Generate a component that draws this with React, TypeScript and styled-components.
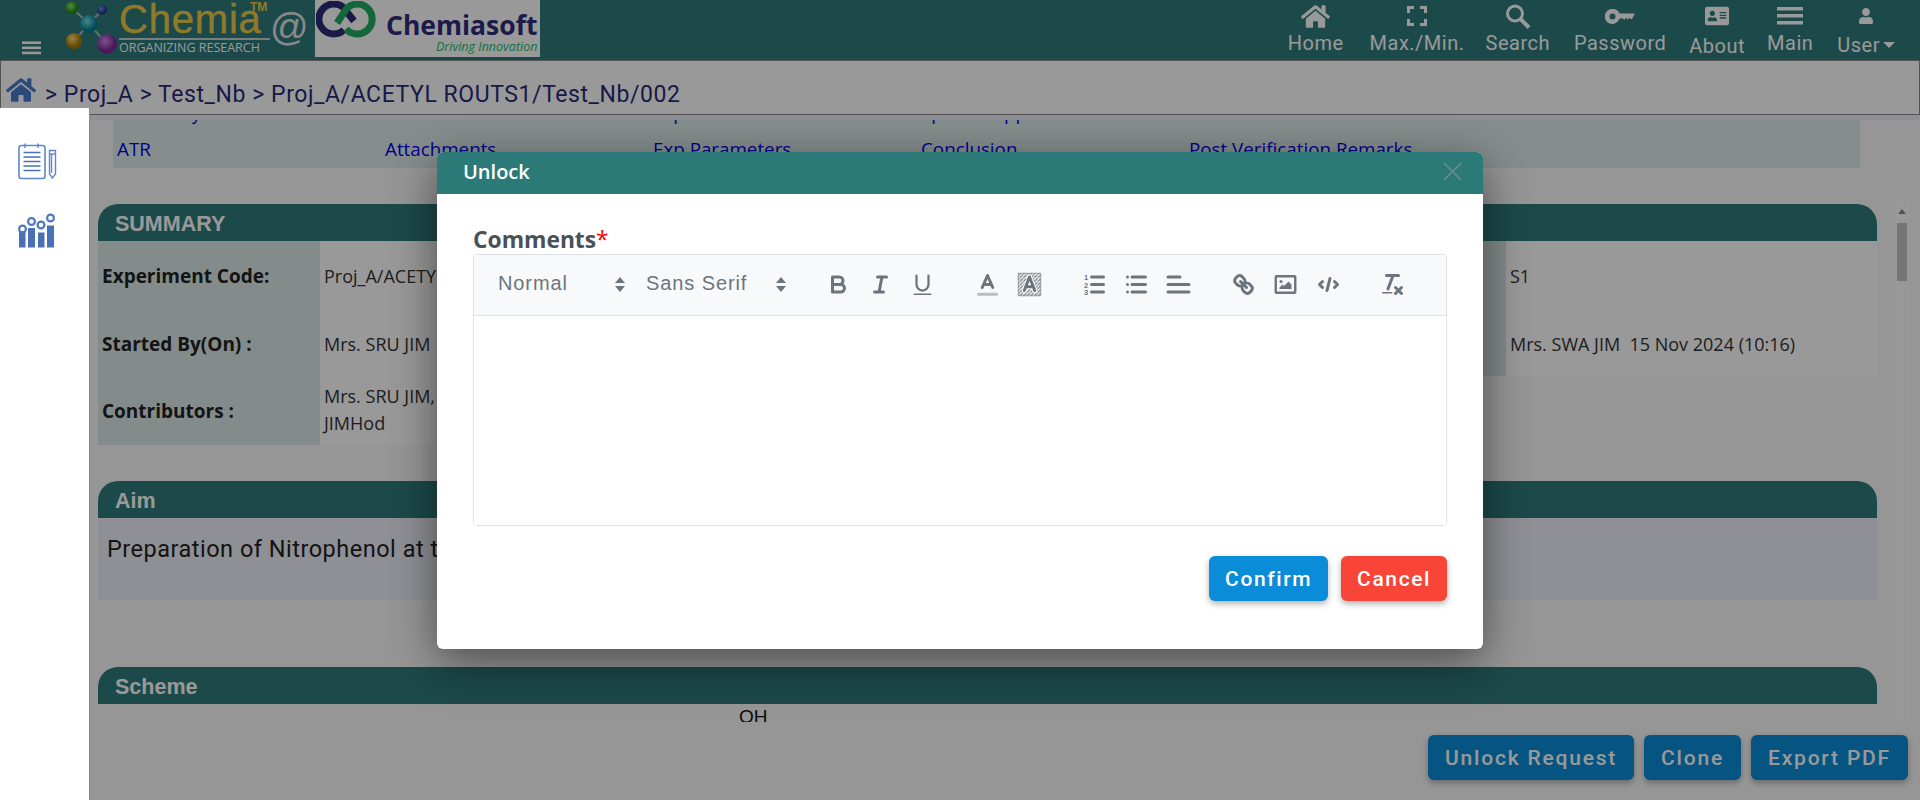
import React from "react";
import styled, { createGlobalStyle } from "styled-components";
import { FaAddressCard, FaHome, FaUser } from "react-icons/fa";

const GlobalStyle = createGlobalStyle`
  html, body {
    margin: 0;
    padding: 0;
    height: 100%;
    overflow: hidden;
    background: #fafafa;
    font-family: Roboto, "Liberation Sans", sans-serif;
  }
  * { box-sizing: border-box; }
`;

const NAV_ITEMS = [
  { label: "Home", icon: <FaHome size={29} />, gap: 26 },
  { label: "Max./Min.", icon: <FullscreenIcon />, gap: 21 },
  { label: "Search", icon: <SearchIcon />, gap: 24 },
  { label: "Password", icon: <KeyIcon />, gap: 23 },
  { label: "About", icon: <FaAddressCard size={24} />, gap: 22, drop: 3 },
  { label: "Main", icon: <BarsIcon />, gap: 24 },
];

const TAB_ROWS = [
  ["Summary", "Details", "Exp Procedure", "Spectra Apparatus", "Verification"],
  ["ATR", "Attachments", "Exp Parameters", "Conclusion", "Post Verification Remarks"],
];

function FullscreenIcon() {
  return (
    <svg width="20" height="20" viewBox="0 0 20 20" fill="none" stroke="currentColor" strokeWidth="3">
      <path d="M1.5 7V1.5H7M13 1.5H18.5V7M18.5 13V18.5H13M7 18.5H1.5V13" />
    </svg>
  );
}

function SearchIcon() {
  return (
    <svg width="26" height="25" viewBox="0 0 26 25" fill="none" stroke="currentColor">
      <circle cx="10" cy="9.5" r="7.5" strokeWidth="3" />
      <path d="M15.5 15L24 23.5" strokeWidth="4" />
    </svg>
  );
}

function KeyIcon() {
  return (
    <svg width="30" height="15" viewBox="0 0 30 15" fill="currentColor">
      <path fillRule="evenodd" d="M7.5 0a7.5 7.5 0 0 1 7 4.5H30l-3 5.500h-1.5L24 8.500 22.500 11 21 8.500 19.500 11 18 9.500h-3.500a7.500 7.500 0 1 1-7-9.500zm0 4.500a3 3 0 1 0 0 6 3 3 0 0 0 0-6z" />
    </svg>
  );
}

function BarsIcon() {
  return (
    <svg width="26" height="18" viewBox="0 0 26 18" fill="currentColor">
      <rect width="26" height="3.5" />
      <rect y="7" width="26" height="3.5" />
      <rect y="14" width="26" height="3.5" />
    </svg>
  );
}

function Molecule() {
  return (
    <svg width="60" height="56" viewBox="0 0 60 56">
      <defs>
        <radialGradient id="mGreen" cx="40%" cy="35%"><stop offset="0" stopColor="#8fe86a" /><stop offset="1" stopColor="#1f8a22" /></radialGradient>
        <radialGradient id="mBlue" cx="40%" cy="35%"><stop offset="0" stopColor="#6f8fe0" /><stop offset="1" stopColor="#203a90" /></radialGradient>
        <radialGradient id="mTeal" cx="40%" cy="35%"><stop offset="0" stopColor="#6fe4ee" /><stop offset="1" stopColor="#0a7e92" /></radialGradient>
        <radialGradient id="mGold" cx="40%" cy="35%"><stop offset="0" stopColor="#ffe070" /><stop offset="1" stopColor="#a87a08" /></radialGradient>
        <radialGradient id="mPurple" cx="40%" cy="35%"><stop offset="0" stopColor="#d08ae0" /><stop offset="1" stopColor="#7a2a98" /></radialGradient>
      </defs>
      <path d="M12 8L29 24L42 10M29 24L14 41M29 24L47 44" stroke="#b0b8b8" strokeWidth="2" fill="none" />
      <circle cx="12" cy="8" r="6.5" fill="url(#mGreen)" />
      <circle cx="42" cy="10" r="5" fill="url(#mBlue)" />
      <circle cx="29" cy="24" r="9" fill="url(#mTeal)" />
      <circle cx="14" cy="41" r="8" fill="url(#mGold)" />
      <circle cx="47" cy="44" r="10" fill="url(#mPurple)" />
    </svg>
  );
}

function RingsLogo() {
  return (
    <svg width="62" height="40" viewBox="0 0 62 40" fill="none" strokeWidth="7">
      <path d="M28 29A15 15 0 1 1 27 6L38 20" stroke="#2d2a78" />
      <path d="M21 22L31 7A15 15 0 1 1 30 28" stroke="#21ad62" />
    </svg>
  );
}

function NotepadIcon() {
  return (
    <svg width="40" height="37" viewBox="0 0 40 37" fill="none" stroke="#5f86cf">
      <rect x="1" y="2.5" width="26" height="33" rx="2.5" strokeWidth="1.6" />
      <path d="M7 0.5V5M20 0.5V5" strokeWidth="1.4" />
      <path d="M5.5 9.5H22.5M5.5 14H22.5M5.5 18.5H22.5M5.5 23H22.5M5.5 27.5H22.5" strokeWidth="1.3" stroke="#4a70b8" />
      <path d="M31.5 7.5H37.5V31L34.5 35L31.5 31Z" strokeWidth="1.4" />
      <path d="M31.5 11H37.5" strokeWidth="1.4" />
      <path d="M33.5 11V30" strokeWidth="1.4" />
    </svg>
  );
}

function ChartIcon() {
  return (
    <svg width="38" height="35" viewBox="0 0 38 35" fill="none">
      <path d="M1 18H7.5V34.500H1ZM10 15H17V34.500H10ZM20 19.500H26.500V34.500H20ZM29 12.500H36V34.500H29Z" fill="#4a70b8" />
      <g stroke="#4f78c0" strokeWidth="2.200">
        <circle cx="4.500" cy="16" r="3.400" />
        <circle cx="13.500" cy="8.500" r="3.400" />
        <circle cx="23" cy="12" r="3.400" />
        <circle cx="32.500" cy="5" r="3.400" />
      </g>
    </svg>
  );
}

// quill snow toolbar icons, 18 unit grid
const QuillSvg: React.FC<{ children: React.ReactNode }> = ({ children }) => (
  <svg width="27" height="27" viewBox="0 0 18 18" fill="none" stroke="#6c757d" strokeWidth="2" strokeLinecap="round" strokeLinejoin="round">
    {children}
  </svg>
);

const ToolIcons: Record<string, React.ReactNode> = {
  bold: (
    <QuillSvg>
      <path d="M5,4H9.500A2.500,2.500,0,0,1,12,6.500v0A2.500,2.500,0,0,1,9.500,9H5V4Z" />
      <path d="M5,9h5.500A2.500,2.500,0,0,1,13,11.500v0A2.500,2.500,0,0,1,10.500,14H5V9Z" />
    </QuillSvg>
  ),
  italic: (
    <QuillSvg>
      <path d="M7 4H13M5 14H11M8 14L10 4" />
    </QuillSvg>
  ),
  underline: (
    <QuillSvg>
      <path d="M5,3V9a4,4,0,0,0,4,4h0a4,4,0,0,0,4-4V3" strokeWidth="1.500" />
      <rect x="3" y="15" width="12" height="1" rx="0.500" fill="#6c757d" stroke="none" />
    </QuillSvg>
  ),
  color: (
    <QuillSvg>
      <path d="M3 15.500H15" stroke="#b9bdc1" />
      <path d="M5.500 11L9 3L12.500 11M11.630 9H6.380" />
    </QuillSvg>
  ),
  background: (
    <QuillSvg>
      <defs>
        <pattern id="hatch" width="2.400" height="2.400" patternUnits="userSpaceOnUse">
          <path d="M0 2.400L2.400 0" stroke="#6c757d" strokeWidth="0.800" />
        </pattern>
      </defs>
      <rect x="1.500" y="1.500" width="15" height="15" fill="url(#hatch)" stroke="#6c757d" strokeWidth="0.500" strokeDasharray="0.700 0.700" />
      <path d="M5.500 13L9 4L12.500 13M11.630 10.500H6.380" stroke="#fff" strokeWidth="3.200" />
      <path d="M5.500 13L9 4L12.500 13M11.630 10.500H6.380" />
    </QuillSvg>
  ),
  ordered: (
    <QuillSvg>
      <path d="M7 4H15M7 9H15M7 14H15" />
      <g fill="#6c757d" stroke="none" fontFamily="Liberation Sans" fontSize="5" fontWeight="700">
        <text x="2" y="6">1</text>
        <text x="2" y="11">2</text>
        <text x="2" y="16">3</text>
      </g>
    </QuillSvg>
  ),
  bullet: (
    <QuillSvg>
      <path d="M6 4H15M6 9H15M6 14H15M3 4V4M3 9V9M3 14V14" />
    </QuillSvg>
  ),
  align: (
    <QuillSvg>
      <path d="M2 9H16M2 14H16M2 4H10" />
    </QuillSvg>
  ),
  link: (
    <QuillSvg>
      <path d="M7 7L11 11" />
      <path d="M8.900,4.577a3.476,3.476,0,0,1,.36,4.679A3.476,3.476,0,0,1,4.577,8.900C3.185,7.500,2.035,6.400,4.217,4.217S7.500,3.185,8.900,4.577Z" />
      <path d="M13.423,9.100a3.476,3.476,0,0,0-4.679-.36,3.476,3.476,0,0,0,.36,4.679c1.392,1.392,2.500,2.542,4.679.36S14.815,10.500,13.423,9.100Z" />
    </QuillSvg>
  ),
  image: (
    <QuillSvg>
      <rect x="2.500" y="3.500" width="13" height="11" rx="0.500" strokeWidth="1.600" />
      <circle cx="6" cy="7" r="1" fill="#6c757d" stroke="none" />
      <polygon points="5 12 5 11 7 9 8 10 11 7 13 9 13 12 5 12" fill="#6c757d" stroke="none" />
    </QuillSvg>
  ),
  code: (
    <QuillSvg>
      <path d="M5 7L3 9L5 11M13 7L15 9L13 11M10 5L8 13" />
    </QuillSvg>
  ),
  clean: (
    <QuillSvg>
      <path d="M5 3H13M6 12L9.350 3M11 11L15 15M15 11L11 15" />
      <rect x="2" y="14" width="7" height="1" rx="0.500" fill="#6c757d" stroke="none" />
    </QuillSvg>
  ),
};

const TOOL_GROUPS = [
  ["bold", "italic", "underline"],
  ["color", "background"],
  ["ordered", "bullet", "align"],
  ["link", "image", "code"],
  ["clean"],
];

const App: React.FC = () => {
  return (
    <>
      <GlobalStyle />
      <Page>
        <Header>
          <MenuToggle>
            <BarsIcon />
          </MenuToggle>
          <MoleculeSlot>
            <Molecule />
          </MoleculeSlot>
          <Brand>
            <BrandName>Chemia</BrandName>
            <TradeMark>TM</TradeMark>
            <BrandTag>ORGANIZING RESEARCH</BrandTag>
          </Brand>
          <AtSign>@</AtSign>
          <PartnerLogo>
            <RingsLogo />
            <PartnerText>
              <PartnerName>Chemiasoft</PartnerName>
              <PartnerTag>Driving Innovation</PartnerTag>
            </PartnerText>
          </PartnerLogo>
          <Nav>
            {NAV_ITEMS.map((item) => (
              <NavItem key={item.label} $gap={item.gap}>
                <NavIcon>{item.icon}</NavIcon>
                <NavLabel $drop={item.drop ?? 0}>{item.label}</NavLabel>
              </NavItem>
            ))}
            <NavItem $gap={0}>
              <NavIcon>
                <FaUser size={16} />
              </NavIcon>
              <NavLabel $drop={2}>
                User<Caret />
              </NavLabel>
            </NavItem>
          </Nav>
        </Header>

        <Breadcrumb>
          <CrumbHome>
            <FaHome size={30} />
          </CrumbHome>
          <CrumbText>&gt; Proj_A &gt; Test_Nb &gt; Proj_A/ACETYL ROUTS1/Test_Nb/002</CrumbText>
        </Breadcrumb>

        <Body>
          <Sidebar>
            <NotepadIcon />
            <ChartIcon />
          </Sidebar>
          <Main>
            <TopBand />
            <TabStrip>
              {TAB_ROWS.map((row, i) => (
                <TabRow key={i} $first={i === 0}>
                  {row.map((tab) => (
                    <TabLink key={tab}>{tab}</TabLink>
                  ))}
                </TabRow>
              ))}
            </TabStrip>

            <ScrollArea>
              <Content>
                <Section $top={36}>
                  <SectionBar>
                    <SectionTitle>SUMMARY</SectionTitle>
                  </SectionBar>
                  <SummaryGrid>
                    <LabelCell>Experiment Code:</LabelCell>
                    <ValueCell>Proj_A/ACETYL ROUTS1/Test_Nb/002</ValueCell>
                    <LabelCell>Reference:</LabelCell>
                    <ValueCell>S1</ValueCell>
                    <LabelCell>Started By(On) :</LabelCell>
                    <ValueCell>Mrs. SRU JIM&nbsp;&nbsp;15 Nov 2024 (10:10)</ValueCell>
                    <LabelCell>Completed By(On) :</LabelCell>
                    <ValueCell>Mrs. SWA JIM&nbsp; 15 Nov 2024 (10:16)</ValueCell>
                    <LabelCell>Contributors :</LabelCell>
                    <ContributorCell>
                      Mrs. SRU JIM, Mrs. SWA JIM,
                      <br />
                      JIMHod
                    </ContributorCell>
                  </SummaryGrid>
                </Section>

                <Section $top={36}>
                  <SectionBar>
                    <SectionTitle>Aim</SectionTitle>
                  </SectionBar>
                  <AimBody>Preparation of Nitrophenol at temperature</AimBody>
                </Section>

                <Section $top={67}>
                  <SectionBar>
                    <SectionTitle>Scheme</SectionTitle>
                  </SectionBar>
                  <SchemeBody>OH</SchemeBody>
                </Section>
              </Content>
              <Scrollbar>
                <ScrollArrow />
                <ScrollThumb />
              </Scrollbar>
            </ScrollArea>

            <ActionRow>
              <ActionButton>Unlock Request</ActionButton>
              <ActionButton>Clone</ActionButton>
              <ActionButton>Export PDF</ActionButton>
            </ActionRow>
          </Main>
        </Body>

        <Overlay>
          <Modal>
            <ModalHeader>
              <ModalTitle>Unlock</ModalTitle>
              <CloseIcon viewBox="0 0 20 20">
                <path d="M1 1L19 19M19 1L1 19" />
              </CloseIcon>
            </ModalHeader>
            <ModalBody>
              <FieldLabel>
                Comments<Required>*</Required>
              </FieldLabel>
              <Editor>
                <Toolbar>
                  <Picker $caret={13}>
                    <PickerLabel>Normal</PickerLabel>
                  </Picker>
                  <Picker $caret={0}>
                    <PickerLabel>Sans Serif</PickerLabel>
                  </Picker>
                  <ToolGroups>
                    {TOOL_GROUPS.map((group) => (
                      <ToolGroup key={group[0]}>
                        {group.map((name) => (
                          <ToolButton key={name}>{ToolIcons[name]}</ToolButton>
                        ))}
                      </ToolGroup>
                    ))}
                  </ToolGroups>
                </Toolbar>
                <EditorArea />
              </Editor>
              <ModalActions>
                <ActionButton>Confirm</ActionButton>
                <ActionButton $danger>Cancel</ActionButton>
              </ModalActions>
            </ModalBody>
          </Modal>
        </Overlay>
      </Page>
    </>
  );
};

const Page = styled.div`
  position: relative;
  width: 1920px;
  height: 800px;
  overflow: hidden;
  display: flex;
  flex-direction: column;
`;

const Header = styled.header`
  height: 60px;
  flex: none;
  display: flex;
  align-items: flex-start;
  background: #2f7b7b;
  color: #fff;
`;

const MenuToggle = styled.div`
  margin: 40px 0 0 22px;
  color: #fff;

  svg {
    display: block;
    width: 19px;
    height: 16px;
  }
`;

const MoleculeSlot = styled.div`
  width: 59px;
  margin-left: 19px;
`;

const Brand = styled.div`
  position: relative;
  width: 151px;
  height: 57px;
`;

const BrandName = styled.div`
  font-family: "Liberation Sans", sans-serif;
  font-size: 40px;
  letter-spacing: 0.8px;
  line-height: 38px;
  height: 40px;
  color: #efcc46;
  border-bottom: 2px solid #c8d0d0;
  -webkit-text-stroke: 0.4px #efcc46;
`;

const TradeMark = styled.span`
  position: absolute;
  top: 0;
  left: 131px;
  font-family: "Liberation Sans", sans-serif;
  font-size: 12px;
  font-weight: 700;
  color: #efcc46;
`;

const BrandTag = styled.div`
  font-family: "Open Sans", sans-serif;
  font-size: 12.5px;
  line-height: 15px;
  color: #fff;
  white-space: nowrap;
`;

const AtSign = styled.div`
  width: 45px;
  font-family: "Liberation Sans", sans-serif;
  font-size: 38px;
  line-height: 54px;
  color: #e4e4e4;
`;

const PartnerLogo = styled.div`
  width: 225px;
  height: 57px;
  display: flex;
  align-items: flex-start;
  gap: 8px;
  background: #fff;
  padding: 0 0 0 1px;

  svg {
    margin-top: 1px;
  }
`;

const PartnerText = styled.div`
  display: flex;
  flex-direction: column;
  align-items: flex-end;
  padding-top: 10px;
`;

const PartnerName = styled.div`
  font-family: "Open Sans", sans-serif;
  font-weight: 700;
  font-size: 26.5px;
  line-height: 30px;
  color: #302c7a;
`;

const PartnerTag = styled.div`
  font-family: "Open Sans", sans-serif;
  font-style: italic;
  font-size: 12.5px;
  line-height: 14px;
  color: #22ba69;
`;

const Nav = styled.nav`
  margin-left: auto;
  padding-right: 25px;
  display: flex;
  align-items: flex-start;
`;

const NavItem = styled.div<{ $gap: number }>`
  display: flex;
  flex-direction: column;
  align-items: center;
  margin-right: ${(p) => p.$gap}px;
  color: #fff;
`;

const NavIcon = styled.div`
  height: 32px;
  display: flex;
  align-items: center;
  justify-content: center;
`;

const NavLabel = styled.div<{ $drop: number }>`
  font-size: 20px;
  letter-spacing: 0.5px;
  line-height: 22px;
  margin-top: ${(p) => p.$drop}px;
  white-space: nowrap;
  display: flex;
  align-items: center;
`;

const Caret = styled.span`
  display: inline-block;
  margin-left: 3px;
  border-left: 6px solid transparent;
  border-right: 6px solid transparent;
  border-top: 6px solid #fff;
`;

const Breadcrumb = styled.div`
  height: 55px;
  flex: none;
  display: flex;
  align-items: flex-start;
  padding: 14px 0 0 5px;
  background: #fff;
  border: 1px solid #8a8a8a;
`;

const CrumbHome = styled.div`
  color: #4a7acb;
  height: 30px;
`;

const CrumbText = styled.div`
  margin: 6px 0 0 9px;
  font-size: 23px;
  line-height: 28px;
  letter-spacing: 0.57px;
  color: #2b2a78;
`;

const Body = styled.div`
  flex: 1;
  min-height: 0;
  display: flex;
`;

const Sidebar = styled.aside`
  position: relative;
  z-index: 20;
  width: 90px;
  flex: none;
  margin-top: -7px;
  background: #fff;
  border-right: 1px solid #8c8c8c;
  padding: 35px 0 0 18px;
  display: flex;
  flex-direction: column;
  align-items: flex-start;
  gap: 33px;
`;

const Main = styled.main`
  flex: 1;
  min-width: 0;
  display: flex;
  flex-direction: column;
`;

const TopBand = styled.div`
  height: 5px;
  flex: none;
  background: #eff1f5;
`;

const TabStrip = styled.div`
  height: 48px;
  flex: none;
  margin: 0 60px 0 23px;
  overflow: hidden;
  background: #dfeceb;
`;

const TabRow = styled.div<{ $first: boolean }>`
  height: 36px;
  margin-top: ${(p) => (p.$first ? "-25px" : "0")};
  padding-left: 4px;
  display: grid;
  grid-template-columns: repeat(5, 268px);
  align-items: center;
`;

const TabLink = styled.a`
  font-family: "Open Sans", sans-serif;
  font-size: 18.8px;
  color: #0000ee;
  white-space: nowrap;
`;

const ScrollArea = styled.div`
  flex: 1;
  min-height: 0;
  display: flex;
  overflow: hidden;
`;

const Content = styled.div`
  width: 1779px;
  flex: none;
  margin-left: 8px;
`;

const Section = styled.section<{ $top: number }>`
  margin-top: ${(p) => p.$top}px;
`;

const SectionBar = styled.div`
  height: 37px;
  display: flex;
  align-items: center;
  padding: 3px 0 0 17px;
  background: #2f7b7b;
  border-radius: 20px 20px 0 0;
`;

const SectionTitle = styled.h3`
  margin: 0;
  font-family: "Liberation Sans", sans-serif;
  font-size: 21.5px;
  font-weight: 700;
  color: #fff;
`;

const SummaryGrid = styled.div`
  display: grid;
  grid-template-columns: 222px 964px 222px 371px;
  grid-template-rows: 70px 65px 69px;
  font-family: "Open Sans", sans-serif;
`;

const LabelCell = styled.div`
  display: flex;
  align-items: center;
  padding-left: 4px;
  background: #dae9e8;
  font-size: 19px;
  font-weight: 700;
  color: #222;
  white-space: nowrap;
`;

const ValueCell = styled.div`
  display: flex;
  align-items: center;
  padding-left: 4px;
  background: #fff;
  font-size: 18px;
  color: #333;
  white-space: nowrap;
`;

const ContributorCell = styled(ValueCell)`
  grid-column: 2 / 3;
  display: block;
  padding-top: 7px;
  line-height: 27px;
`;

const AimBody = styled.div`
  height: 82px;
  padding: 15px 0 0 9px;
  background: #eef0f8;
  font-size: 23.5px;
  line-height: 32px;
  letter-spacing: 0.5px;
  color: #222;
`;

const SchemeBody = styled.div`
  padding: 2px 0 0 641px;
  font-family: "Liberation Sans", sans-serif;
  font-size: 19px;
  line-height: 22px;
  color: #111;
`;

const Scrollbar = styled.div`
  width: 15px;
  flex: none;
  margin: 30px 0 0 18px;
  padding-top: 11px;
  background: #fdfdfd;
`;

const ScrollArrow = styled.div`
  width: 0;
  margin: 0 0 9px 3px;
  border-left: 4px solid transparent;
  border-right: 4px solid transparent;
  border-bottom: 5px solid #888;
`;

const ScrollThumb = styled.div`
  width: 10px;
  height: 58px;
  margin-left: 2px;
  background: #c4c4c4;
`;

const ActionRow = styled.div`
  flex: none;
  height: 78px;
  display: flex;
  justify-content: flex-end;
  gap: 10px;
  padding: 13px 12px 0 0;

  button {
    padding: 0 17px;
    letter-spacing: 1.8px;
  }
`;

const ActionButton = styled.button<{ $danger?: boolean }>`
  height: 45px;
  padding: 0 16px;
  border: none;
  border-radius: 6px;
  background: ${(p) => (p.$danger ? "#f94438" : "#0b8cd8")};
  box-shadow: 0 3px 6px rgba(0, 0, 0, 0.3);
  font-family: Roboto, sans-serif;
  font-size: 21px;
  font-weight: 500;
  letter-spacing: 1.6px;
  color: #fff;
`;

const Overlay = styled.div`
  position: absolute;
  inset: 0;
  z-index: 10;
  display: flex;
  justify-content: center;
  align-items: flex-start;
  padding-top: 152px;
  background: rgba(0, 0, 0, 0.4);
`;

const Modal = styled.div`
  width: 1046px;
  height: 497px;
  background: #fff;
  border-radius: 6px;
  box-shadow: 0 12px 45px rgba(0, 0, 0, 0.5);
  overflow: hidden;
`;

const ModalHeader = styled.div`
  height: 42px;
  display: flex;
  align-items: center;
  justify-content: space-between;
  padding: 0 21px 3px 26px;
  background: #2b7a78;
`;

const ModalTitle = styled.div`
  font-family: "Open Sans", sans-serif;
  font-size: 20px;
  font-weight: 600;
  color: #fff;
`;

const CloseIcon = styled.svg`
  width: 19px;
  height: 19px;
  fill: none;
  stroke: #6e8f92;
  stroke-width: 1.5;
`;

const ModalBody = styled.div`
  padding: 29px 36px 0;
`;

const FieldLabel = styled.div`
  height: 31px;
  font-family: "Open Sans", sans-serif;
  font-size: 22.8px;
  font-weight: 700;
  line-height: 34px;
  color: #495057;
`;

const Required = styled.span`
  color: #f00;
  font-weight: 400;
`;

const Editor = styled.div`
  height: 272px;
  border: 1px solid #dee2e6;
  border-radius: 4px;
  overflow: hidden;
  display: flex;
  flex-direction: column;
`;

const Toolbar = styled.div`
  height: 61px;
  flex: none;
  display: flex;
  align-items: center;
  padding: 0 0 2px 16px;
  background: #f8f9fa;
  border-bottom: 1px solid #dee2e6;
`;

const Picker = styled.div<{ $caret: number }>`
  position: relative;
  width: 148px;
  padding: 0 0 2px 8px;

  &::before,
  &::after {
    content: "";
    position: absolute;
    right: ${(p) => p.$caret}px;
    border-left: 5px solid transparent;
    border-right: 5px solid transparent;
  }
  &::before {
    top: calc(50% - 7px);
    border-bottom: 6px solid #6c757d;
  }
  &::after {
    top: calc(50% + 2px);
    border-top: 6px solid #6c757d;
  }
`;

const PickerLabel = styled.span`
  font-family: "Liberation Sans", sans-serif;
  font-size: 20px;
  letter-spacing: 0.9px;
  color: #6c757d;
`;

const ToolGroups = styled.div`
  display: flex;
  gap: 22px;
  margin-left: 31px;
`;

const ToolGroup = styled.div`
  display: flex;
`;

const ToolButton = styled.div`
  width: 42.4px;
  height: 27px;
  display: flex;
  justify-content: center;
`;

const EditorArea = styled.div`
  flex: 1;
  background: #fff;
`;

const ModalActions = styled.div`
  display: flex;
  justify-content: flex-end;
  gap: 13px;
  margin-top: 30px;
`;

export default App;
